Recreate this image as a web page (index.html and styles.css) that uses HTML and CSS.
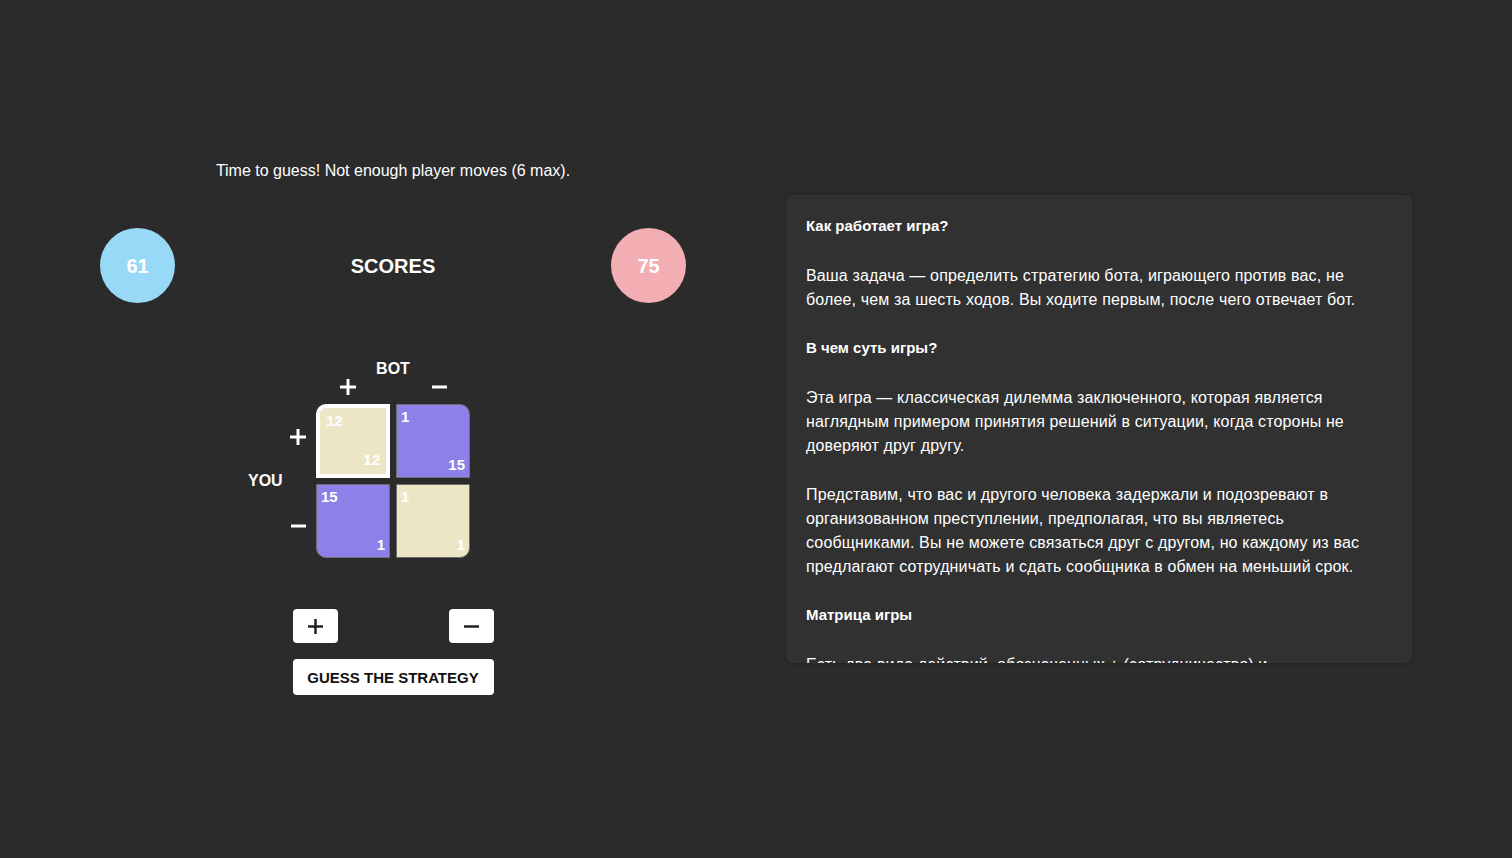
FILE: index.html
```html
<!DOCTYPE html>
<html lang="ru">
<head>
<meta charset="utf-8">
<title>Prisoner's dilemma</title>
<link rel="stylesheet" href="styles.css">
</head>
<body>
<main class="page">
  <section class="game">
    <p class="status">Time to guess! Not enough player moves (6 max).</p>
    <div class="scores">
      <div class="score score-you">61</div>
      <div class="scores-title">SCORES</div>
      <div class="score score-bot">75</div>
    </div>
    <div class="matrix">
      <div class="bot-label">BOT</div>
      <div class="col-signs">
        <svg class="sign" width="16" height="16" viewBox="0 0 16 16"><rect x="0" y="6.5" width="16" height="3"/><rect x="6.5" y="0" width="3" height="16"/></svg>
        <svg class="sign" width="15" height="16" viewBox="0 0 15 16"><rect x="0" y="6.5" width="15" height="3"/></svg>
      </div>
      <div class="you-label">YOU</div>
      <div class="row-signs">
        <svg class="sign" width="16" height="16" viewBox="0 0 16 16"><rect x="0" y="6.5" width="16" height="3"/><rect x="6.5" y="0" width="3" height="16"/></svg>
        <svg class="sign" width="15" height="16" viewBox="0 0 15 16"><rect x="0" y="6.5" width="15" height="3"/></svg>
      </div>
      <div class="cells">
        <div class="cell beige selected tl"><span>12</span><span class="b">12</span></div>
        <div class="cell purple tr"><span>1</span><span class="b">15</span></div>
        <div class="cell purple bl"><span>15</span><span class="b">1</span></div>
        <div class="cell beige br"><span>1</span><span class="b">1</span></div>
      </div>
    </div>
    <div class="controls">
      <div class="moves">
        <button class="btn btn-move" type="button" aria-label="plus">
          <svg width="15" height="15" viewBox="0 0 15 15"><rect x="0" y="6.25" width="15" height="2.5"/><rect x="6.25" y="0" width="2.5" height="15"/></svg>
        </button>
        <button class="btn btn-move" type="button" aria-label="minus">
          <svg width="15" height="15" viewBox="0 0 15 15"><rect x="0" y="6.25" width="15" height="2.5"/></svg>
        </button>
      </div>
      <button class="btn btn-guess" type="button">GUESS THE STRATEGY</button>
    </div>
  </section>

  <aside class="info">
    <h3>Как работает игра?</h3>
    <p>Ваша задача — определить стратегию бота, играющего против вас, не более, чем за шесть ходов. Вы ходите первым, после чего отвечает бот.</p>
    <h3>В чем суть игры?</h3>
    <p>Эта игра — классическая дилемма заключенного, которая является наглядным примером принятия решений в ситуации, когда стороны не доверяют друг другу.</p>
    <p>Представим, что вас и другого человека задержали и подозревают в организованном преступлении, предполагая, что вы являетесь сообщниками. Вы не можете связаться друг с другом, но каждому из вас предлагают сотрудничать и сдать сообщника в обмен на меньший срок.</p>
    <h3>Матрица игры</h3>
    <p>Есть два вида действий, обозначенных + (сотрудничество) и − (предательство). Количество очков зависит от того, какие действия выбрали вы и бот.</p>
  </aside>
</main>
</body>
</html>
```

FILE: styles.css
```css
html, body {
  margin: 0;
  padding: 0;
  background: #2b2b2b;
  color: #ffffff;
  font-family: "Liberation Sans", Arial, Helvetica, sans-serif;
}

.page {
  height: 858px;
  display: flex;
  justify-content: center;
  align-items: center;
  gap: 100px;
}

/* left column */
.game {
  width: 586px;
  display: flex;
  flex-direction: column;
  align-items: center;
  padding-bottom: 3px;
}

.status {
  margin: 0;
  font-size: 16px;
  line-height: 22px;
}

.scores {
  margin-top: 46px;
  width: 100%;
  display: flex;
  justify-content: space-between;
  align-items: center;
}

.score {
  width: 75px;
  height: 75px;
  border-radius: 50%;
  display: flex;
  align-items: center;
  justify-content: center;
  font-size: 20px;
  font-weight: bold;
  color: #ffffff;
  padding-top: 1px;
  box-sizing: border-box;
}

.score-you { background: #97d9f6; }
.score-bot { background: #f3aeb3; }

.scores-title {
  font-size: 20px;
  font-weight: bold;
  padding-top: 1px;
}

/* matrix */
.matrix {
  margin-top: 56px;
  width: 290px;
  display: grid;
  grid-template-columns: 34px 34px 154px 68px;
  grid-template-rows: 20px 25px 154px;
}

.bot-label {
  grid-column: 3;
  grid-row: 1;
  text-align: center;
  font-size: 16px;
  font-weight: bold;
  line-height: 20px;
}

.col-signs {
  grid-column: 3;
  grid-row: 2;
  display: flex;
  justify-content: space-between;
  align-items: flex-start;
  padding: 0 23px 0 24px;
}

.you-label {
  grid-column: 1;
  grid-row: 3;
  align-self: center;
  font-size: 16px;
  font-weight: bold;
  line-height: 20px;
  text-align: center;
}

.row-signs {
  grid-column: 2;
  grid-row: 3;
  display: flex;
  flex-direction: column;
  justify-content: space-between;
  align-items: center;
  padding: 25px 0 24px 0;
  margin-left: -2px;
}

.sign {
  display: block;
  fill: #ffffff;
}

.cells {
  grid-column: 3;
  grid-row: 3;
  display: grid;
  grid-template-columns: 74px 74px;
  grid-template-rows: 74px 74px;
  gap: 6px;
}

.cell {
  box-sizing: border-box;
  border: 1px solid #6e6e6e;
  padding: 3px 4px 3px 4px;
  display: flex;
  flex-direction: column;
  justify-content: space-between;
  align-items: flex-start;
  font-size: 15px;
  font-weight: bold;
  line-height: 18px;
  color: #ffffff;
}

.cell .b { align-self: flex-end; }

.beige { background: #ede6c6; }
.purple { background: #8d80e8; }

.cell.selected {
  border: 4px solid #ffffff;
  padding: 4px 6px 5px 6px;
}

.tl { border-top-left-radius: 10px; }
.tr { border-top-right-radius: 10px; }
.bl { border-bottom-left-radius: 10px; }
.br { border-bottom-right-radius: 10px; }

/* controls */
.controls {
  margin-top: 51px;
  width: 201px;
  display: flex;
  flex-direction: column;
  gap: 16px;
}

.moves {
  display: flex;
  justify-content: space-between;
}

.btn {
  background: #ffffff;
  border: none;
  border-radius: 4px;
  color: #111111;
  font-family: "Liberation Sans", Arial, Helvetica, sans-serif;
  cursor: pointer;
  padding: 0;
}

.btn-move {
  width: 45px;
  height: 34px;
  display: flex;
  align-items: center;
  justify-content: center;
}

.btn-move svg {
  display: block;
  fill: #222222;
}

.btn-guess {
  height: 36px;
  width: 201px;
  font-size: 15px;
  font-weight: bold;
}

/* info panel */
.info {
  width: 626px;
  height: 468px;
  box-sizing: border-box;
  padding: 19px 20px 0 20px;
  background: #313131;
  border-radius: 6px;
  box-shadow: 0 0 4px rgba(0, 0, 0, 0.25);
  overflow: hidden;
  font-size: 16px;
  line-height: 24px;
  letter-spacing: 0.15px;
}

.info h3,
.info p {
  margin: 0 0 25px 0;
  font-size: 16px;
  line-height: 24px;
}

.info p {
  padding-top: 1px;
  margin-bottom: 24px;
}

.info h3 {
  font-size: 15px;
  font-weight: bold;
  letter-spacing: 0;
}
```
